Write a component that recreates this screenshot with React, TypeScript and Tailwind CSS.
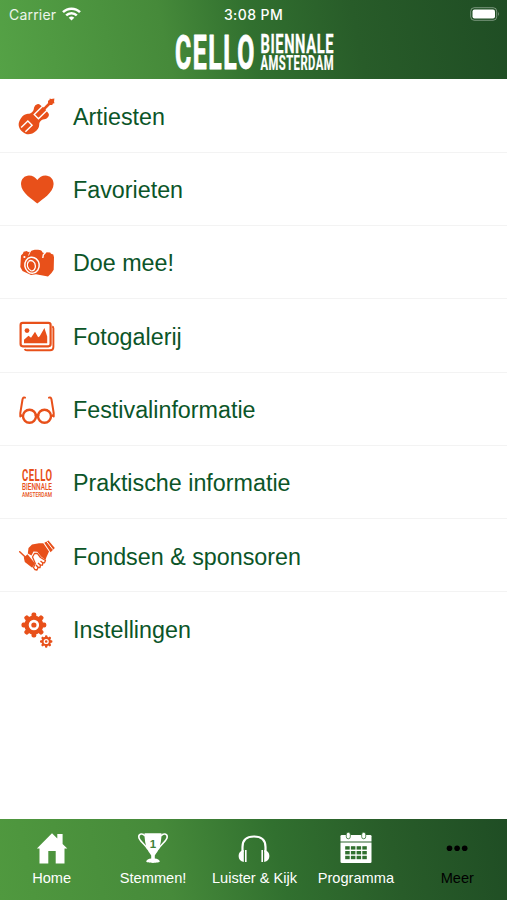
import type { ReactNode } from "react";

const ORANGE = "#e8501a";

type MenuItem = {
  id: string;
  label: string;
  icon: ReactNode;
};

const menuItems: MenuItem[] = [
  { id: "artists", label: "Artiesten", icon: <ViolinIcon /> },
  { id: "favorites", label: "Favorieten", icon: <HeartIcon /> },
  { id: "join", label: "Doe mee!", icon: <CameraIcon /> },
  { id: "gallery", label: "Fotogalerij", icon: <GalleryIcon /> },
  { id: "festival", label: "Festivalinformatie", icon: <GlassesIcon /> },
  { id: "practical", label: "Praktische informatie", icon: <BiennaleIcon /> },
  { id: "sponsors", label: "Fondsen & sponsoren", icon: <HandshakeIcon /> },
  { id: "settings", label: "Instellingen", icon: <GearsIcon /> },
];

const tabs: MenuItem[] = [
  { id: "home", label: "Home", icon: <HomeIcon /> },
  { id: "vote", label: "Stemmen!", icon: <TrophyIcon /> },
  { id: "listen", label: "Luister & Kijk", icon: <HeadphonesIcon /> },
  { id: "program", label: "Programma", icon: <CalendarIcon /> },
  { id: "more", label: "Meer", icon: <MoreIcon /> },
];

export default function App() {
  return (
    <div className="flex h-screen w-full flex-col overflow-hidden bg-white font-['Liberation_Sans',Arial,sans-serif]">
      <header className="h-[79px] shrink-0 bg-[linear-gradient(78deg,#55a246_0%,#468a3a_33%,#31702f_50%,#285c29_70%,#1f4d24_100%)]">
        <StatusBar />
        <Logo />
      </header>

      <main className="flex-1 pt-[0.4px]">
        {menuItems.map((item) => (
          <MenuRow key={item.id} item={item} />
        ))}
      </main>

      <nav className="grid h-[81px] shrink-0 grid-cols-5 bg-[linear-gradient(78deg,#50993f_0%,#468a3a_33%,#31702f_55%,#285c29_77%,#1f4d24_100%)]">
        {tabs.map((tab) => (
          <TabButton key={tab.id} tab={tab} active={tab.id === "more"} />
        ))}
      </nav>
    </div>
  );
}

function StatusBar() {
  return (
    <div className="grid h-7 grid-cols-3 items-center font-[Inter,sans-serif] text-white">
      <div className="flex items-center gap-[6px] pl-[9px]">
        <span className="text-[14px] tracking-[0.2px] text-white/90">Carrier</span>
        <svg width="19" height="14" viewBox="0 0 19 14" fill="none" stroke="white" strokeWidth="2.5">
          <path d="M1 5.2a12 12 0 0 1 17 0" />
          <path d="M4.2 8.4a7.5 7.5 0 0 1 10.6 0" />
          <path d="M9.5 13.6 6.7 10.8a4 4 0 0 1 5.6 0Z" fill="white" stroke="none" />
        </svg>
      </div>
      <span className="text-center text-[14px] font-medium tracking-[0.4px]">3:08 PM</span>
      <div className="flex justify-end pr-[7px]">
        <svg width="30" height="14" viewBox="0 0 30 14">
          <rect x="0.7" y="0.7" width="26" height="12.6" rx="3.6" fill="none" stroke="white" strokeOpacity="0.4" />
          <rect x="2.5" y="2.5" width="22.5" height="9" rx="2" fill="white" />
          <path d="M28.2 4.8q1.6 2.2 0 4.4z" fill="white" fillOpacity="0.5" />
        </svg>
      </div>
    </div>
  );
}

function Logo() {
  return (
    <svg
      className="mx-auto mt-[4px] block overflow-visible"
      width="160"
      height="40"
      viewBox="0 0 160 40"
      fill="white"
      stroke="white"
      strokeLinejoin="round"
      fontFamily="Roboto, sans-serif"
      fontWeight="700"
    >
      <text x="1" y="36.8" fontSize="48" strokeWidth="1" letterSpacing="3" textLength="81" lengthAdjust="spacingAndGlyphs">CELLO</text>
      <text x="86.500" y="20.5" fontSize="25" strokeWidth="0.3" letterSpacing="1" textLength="73.5" lengthAdjust="spacingAndGlyphs">BIENNALE</text>
      <text x="86.500" y="37.7" fontSize="19.5" strokeWidth="0.2" letterSpacing="0.8" textLength="73.5" lengthAdjust="spacingAndGlyphs">AMSTERDAM</text>
    </svg>
  );
}

function MenuRow({ item }: { item: MenuItem }) {
  return (
    <button
      type="button"
      className="flex h-[73.3px] w-full items-center gap-[18px] border-b-[1.5px] border-[#f3f3f3] pl-[19px] text-left text-[#0b5528] last:border-transparent"
    >
      {item.icon}
      <span className="pt-[4px] text-[23.3px] leading-none">{item.label}</span>
    </button>
  );
}

function TabButton({ tab, active }: { tab: MenuItem; active: boolean }) {
  return (
    <button type="button" className={active ? "flex flex-col items-center pt-[13px] pl-[2px] text-black" : "flex flex-col items-center pt-[13px] pl-[2px] text-white"}>
      {tab.icon}
      <span className="mt-[6px] text-[14.6px] leading-4 whitespace-nowrap">{tab.label}</span>
    </button>
  );
}

function RowIcon({ children }: { children: ReactNode }) {
  return (
    <svg className="shrink-0 overflow-visible" width="36" height="36" viewBox="0 0 36 36" fill={ORANGE}>
      {children}
    </svg>
  );
}

function TabIcon({ children }: { children: ReactNode }) {
  return (
    <svg width="32" height="32" viewBox="0 0 32 32" fill="currentColor">
      {children}
    </svg>
  );
}

function ViolinIcon() {
  return (
    <RowIcon>
      <g transform="translate(17.700 18.300) rotate(45)">
        <path d="M0-11C3-11.500 4-10.500 5.500-10.500 8-10.500 9-8 8.500-5.500 8.200-3.800 6.500-3 6.200-.5 6 1.500 6.500 3 8 4.500 9.800 6.500 10.300 9.500 9.700 13 8.700 18.500 5 21 0 21S-8.700 18.500-9.700 13C-10.300 9.500-9.800 6.500-8 4.500-6.500 3-6 1.500-6.200-.5-6.500-3-8.200-3.800-8.500-5.500-9-8-8-10.500-5.500-10.500-4-10.500-3-11.500 0-11Z" />
        <path d="M-3-12V.500H3V-12" fill="none" stroke="white" strokeWidth="1.400" />
        <path d="M-1.300-18.500H1.300V-1H-1.300Z" />
        <path d="M0-25 2-22.500 3.400-21.800 2.400-20.500 3-19 1.500-17.500H-1.500L-3-19-2.400-20.500-3.400-21.800-2-22.500Z" />
        <path d="M-3 19V9.500H3V19" fill="none" stroke="white" strokeWidth="1.400" />
      </g>
    </RowIcon>
  );
}

function HeartIcon() {
  return (
    <RowIcon>
      <path d="M18.300 32.500C14 28.500 2 22 2 13 2 8 5.600 4.500 10 4.500c3.600 0 6.500 1.800 8.300 4.500 1.800-2.700 4.700-4.500 8.200-4.500 4.500 0 8.100 3.500 8.100 8.500 0 9-12 15.500-16.300 19.500Z" />
    </RowIcon>
  );
}

function CameraIcon() {
  return (
    <RowIcon>
      <path d="M2 11.500 4 9.500l.6-1.700 3.400-.9.900 1.200 2.600-.4C13 5.500 20 5.400 22.500 6.700l1.300 2 2.200.4 1.200-.9 4 .3L32 9.800l2.300.8.700 2.700-.3 12.400L32.500 29 29 32.400 17 30.300l-5 .7-8.500-4L1.300 23Z" />
      <path d="M27 8 24.300 10.800 23.800 14" fill="none" stroke="white" strokeWidth="1.400" />
      <path d="M9.500 11.500 11.500 7" fill="none" stroke="white" strokeWidth=".8" />
      <ellipse cx="13" cy="21.200" rx="7.200" ry="8" fill="none" stroke="white" strokeWidth="1.500" transform="rotate(-8 13 21.200)" />
      <path d="M9.500 17.500c3-2.500 6.700.5 6.900 4.500.1 3.200-1.800 5.200-4.200 4.800" fill="none" stroke="white" strokeWidth="1.300" />
      <path d="M9.500 17.500c-2.200 2.500-1.500 7.500 2.700 9.300" fill="none" stroke="white" strokeWidth="1.300" />
      <circle cx="5.400" cy="13" r="1.100" fill="white" />
    </RowIcon>
  );
}

function GalleryIcon() {
  return (
    <RowIcon>
      <path d="M33.200 9.500c.9.300 1.200 1 1.200 2V30c0 2.500-.8 3.300-3.300 3.300H8c-1.300 0-2-.3-2.300-1.300" fill="none" stroke={ORANGE} strokeWidth="1.900" />
      <rect x="1.600" y="5.800" width="30" height="23.500" rx="2.200" fill="none" stroke={ORANGE} strokeWidth="2.200" />
      <circle cx="8" cy="13.600" r="2.400" />
      <path d="M5 26.200v-3.500l4.500-4 2.500 2 4-6 3.200 5.500 1.500-1L25.400 11l2.800 8.500v6.700Z" />
    </RowIcon>
  );
}

function GlassesIcon() {
  return (
    <RowIcon>
      <g fill="none" stroke={ORANGE} strokeWidth="2" strokeLinecap="round">
        <circle cx="10.500" cy="25.200" r="6.500" strokeWidth="2.400" />
        <circle cx="25.500" cy="25.200" r="6.500" strokeWidth="2.400" />
        <path d="M16.500 24.200q1.500-1 3 0" />
        <path d="M1.300 25.500V22L3.500 8.500C3.900 6.400 4.800 6.200 6 6.700M3.800 25.500 1.300 23.500M34.700 25.500V22L32.500 8.500C32.100 6.400 31.200 6.200 30 6.700M32.200 25.500 34.700 23.500" />
      </g>
    </RowIcon>
  );
}

function BiennaleIcon() {
  return (
    <RowIcon>
      <g fontFamily="Roboto, sans-serif">
        <text x="3" y="17.300" fontSize="17" fontWeight="700" letterSpacing="0.800" textLength="30.500" lengthAdjust="spacingAndGlyphs">CELLO</text>
        <text x="3" y="26.200" fontSize="9.800" fontWeight="500" textLength="30" lengthAdjust="spacingAndGlyphs">BIENNALE</text>
        <text x="3" y="33" fontSize="6.800" fontWeight="500" textLength="30" lengthAdjust="spacingAndGlyphs">AMSTERDAM</text>
      </g>
    </RowIcon>
  );
}

function HandshakeIcon() {
  return (
    <RowIcon>
      {/* left arm */}
      <path d="M.7 14.800 6.500 20.300" stroke={ORANGE} strokeWidth="1.500" strokeLinecap="round" />
      <path d="M4.800 20.500 8.500 17.200 16 26.500 13.200 30.800 5.800 25Z" />
      {/* right arm reaching over */}
      <path d="M8.800 16.500 9.500 11 13 7.500 20 6.300 24.300 6.200 30 14.500 27.300 20.500 26.500 23 22 19.500 18.300 14.800 14.500 14.500 12.500 18.500Z" />
      <path d="M25.300 5.700 29.500 3.500 35.800 11 31.600 15.200Z" />
      <path d="M27.600 4.300 34 12.700" stroke="white" strokeWidth="1" />
      {/* fingers */}
      <path
        d="M13.500 20 15.500 16.500 18.300 16.300 21.500 20.500 26.500 23.500 25.500 25.800 23.800 25.700 23.500 28.200 21.500 28.200 21 30.500 19 30.500 18 33 15.800 32.500 14.500 30.500 16.300 26.500Z"
        fill="white"
        stroke={ORANGE}
        strokeWidth="1.300"
        strokeLinejoin="round"
      />
      <path d="M21.500 24 24 26M19 26 21.500 28.300M17 28 19.200 30.500" stroke={ORANGE} strokeWidth="1.400" />
    </RowIcon>
  );
}

function Gear({ x, y, scale }: { x: number; y: number; scale: number }) {
  return (
    <g transform={`translate(${x} ${y}) scale(${scale})`}>
      {[0, 45, 90, 135, 180, 225, 270, 315].map((angle) => (
        <rect key={angle} x="-2.400" y="-12.400" width="4.800" height="6" rx="1.900" transform={`rotate(${angle})`} />
      ))}
      <circle r="9.500" />
      <circle r="3.900" fill="none" stroke="white" strokeWidth="2.600" />
    </g>
  );
}

function GearsIcon() {
  return (
    <RowIcon>
      <Gear x={14.900} y={14} scale={1} />
      <Gear x={27.200} y={30.500} scale={0.500} />
    </RowIcon>
  );
}

function HomeIcon() {
  return (
    <TabIcon>
      <path d="M16 1.300 21.300 6.600V2h5.300v10L31.300 16.500H28.500V31.600H19.700V19H12.300V31.600H3.500V16.500H.9Z" />
    </TabIcon>
  );
}

function TrophyIcon() {
  return (
    <TabIcon>
      <path d="M7.500 1.200h17c0 5.500-.7 12-3.300 17-1.300 2.500-2.800 4-3.400 5.200v3c2.500.3 5 1.200 5 3.200 0 .8-3 1.300-6.800 1.300s-6.800-.5-6.800-1.300c0-2 2.500-2.900 5-3.200v-3c-.6-1.200-2.100-2.700-3.400-5.200-2.600-5-3.300-11.500-3.300-17Z" />
      <path d="M8 4C6 1 1.600 1.500 1.800 5c.2 4 6.700 7.500 9.200 12.500M24 4c2-3 6.400-2.500 6.200 1-.2 4-6.700 7.500-9.200 12.500" fill="none" stroke="currentColor" strokeWidth="1.600" />
      <text x="16" y="15.500" fontSize="11.500" fontWeight="700" fill="#3f8237" textAnchor="middle">1</text>
    </TabIcon>
  );
}

function HeadphonesIcon() {
  return (
    <TabIcon>
      <path d="M4.500 20V15C4.500 8 9 4.500 16 4.500S27.500 8 27.500 15v5" fill="none" stroke="currentColor" strokeWidth="2.200" />
      <path d="M5.800 18C2.500 18.500.6 21 .6 24s1.900 5.500 5.200 6ZM26.200 18c3.300.5 5.200 3 5.200 6s-1.900 5.500-5.200 6Z" />
      <path d="M7.800 18v12M24.200 18v12" stroke="currentColor" strokeWidth="1.600" />
    </TabIcon>
  );
}

function CalendarIcon() {
  return (
    <TabIcon>
      <path d="M1.800 3H30.200Q31.500 3 31.500 4.300V9.500H.5V4.300Q.5 3 1.800 3Z" />
      <path d="M.5 10.500H31.500V29.800Q31.500 31 30.200 31H1.800Q.5 31 .5 29.800Z" />
      <rect x="6.300" y="0.300" width="4" height="6.500" rx="2" stroke="#31702f" strokeWidth=".8" />
      <rect x="21.700" y="0.300" width="4" height="6.500" rx="2" stroke="#31702f" strokeWidth=".8" />
      {[14.200, 19, 23.800].map((y) =>
        [5.200, 10.900, 16.600, 22.300].map((x) => <rect key={`${x}-${y}`} x={x} y={y} width="4.500" height="3.400" fill="#31702f" />),
      )}
    </TabIcon>
  );
}

function MoreIcon() {
  return (
    <TabIcon>
      <circle cx="8.500" cy="16.200" r="2.800" />
      <circle cx="16.100" cy="16.200" r="2.800" />
      <circle cx="23.700" cy="16.200" r="2.800" />
    </TabIcon>
  );
}
